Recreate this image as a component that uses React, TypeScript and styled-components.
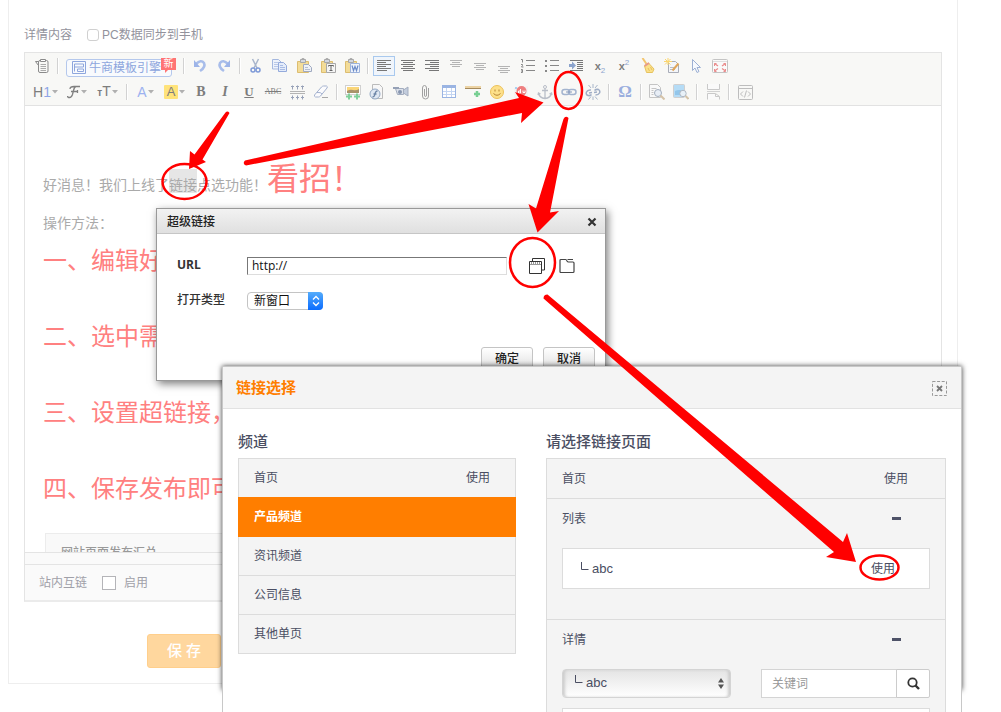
import React from "react";
import styled, { createGlobalStyle } from "styled-components";

const GlobalStyle = createGlobalStyle`
  *, *::before, *::after { box-sizing: border-box; }
  body {
    margin: 0;
    background: #fff;
    font-family: "Liberation Sans", "Noto Sans CJK SC", sans-serif;
    font-size: 12px;
    line-height: 18px;
    color: #4a4e62;
  }
  button, input, select { font: inherit; color: inherit; margin: 0; }
  p, h2, h3, ul { margin: 0; padding: 0; }
`;

const RED = "#ff0000";

/* ---------- page ---------- */

const Page = styled.div`
  position: relative;
  min-height: 100vh;
  overflow: hidden;
`;

const Panel = styled.main`
  margin: 0 43px 0 8px;
  padding: 26px 15px 15px;
  border: 1px solid #eee;
  border-top: 0;
`;

const FieldRow = styled.div`
  display: flex;
  align-items: center;
  height: 18px;
  margin-bottom: 8px;
  color: #92929c;
`;

const CheckLabel = styled.label`
  display: flex;
  align-items: center;
  gap: 3px;
  margin-left: 15px;
`;

const Tick = styled.input<{ $square?: boolean }>`
  appearance: none;
  width: ${(p) => (p.$square ? 14 : 12)}px;
  height: ${(p) => (p.$square ? 14 : 12)}px;
  margin-right: ${(p) => (p.$square ? 5 : 0)}px;
  border: 1px solid ${(p) => (p.$square ? "#b4b4b8" : "#d0d0d0")};
  border-radius: ${(p) => (p.$square ? 0 : 3)}px;
  background: #fff;
`;

/* ---------- editor ---------- */

const Editor = styled.section`
  border: 1px solid #e4e4e4;
  border-bottom: 2px solid #ebebeb;
`;

const Toolbar = styled.div`
  padding: 0 5px;
  background: #f8f8f6;
  border-bottom: 1px solid #e2e2e2;
`;

const ToolRow = styled.div`
  display: flex;
  align-items: center;
  height: 26px;
`;

const ToolButton = styled.button<{ $active?: boolean }>`
  display: flex;
  flex: none;
  align-items: center;
  justify-content: center;
  width: 22px;
  height: 20px;
  margin: 0 1px;
  padding: 0;
  border: 1px solid ${(p) => (p.$active ? "#a9c9ee" : "transparent")};
  background: ${(p) => (p.$active ? "#f0f5fb" : "transparent")};
`;

const DropButton = styled.button<{ $narrow?: boolean }>`
  display: flex;
  flex: none;
  align-items: center;
  justify-content: center;
  gap: 1px;
  width: ${(p) => (p.$narrow ? 29 : 31)}px;
  height: 20px;
  padding: 0;
  border: 0;
  background: transparent;
`;

const Divider = styled.span`
  flex: none;
  width: 2px;
  height: 16px;
  margin: 0 3px;
  background: linear-gradient(90deg, #d2d2d2 50%, #fff 50%);
`;

const Glyph = styled.span<{ $tone?: string; $serif?: boolean; $size?: number; $bold?: boolean }>`
  font-family: ${(p) => (p.$serif ? '"Liberation Serif", serif' : '"Liberation Sans", sans-serif')};
  font-size: ${(p) => p.$size ?? 14}px;
  font-weight: ${(p) => (p.$bold ? 700 : 400)};
  line-height: 16px;
  color: ${(p) => p.$tone ?? "#7d7d7d"};
`;

const ItalicGlyph = styled(Glyph)`
  font-style: italic;
`;

const UnderGlyph = styled(Glyph)`
  text-decoration: underline;
`;

const StrikeGlyph = styled(Glyph)`
  text-decoration: line-through;
`;

const MarkGlyph = styled(Glyph)`
  width: 14px;
  height: 14px;
  line-height: 14px;
  text-align: center;
  border-radius: 1px;
  background: #ffe37a;
`;

const ScriptGlyph = styled(Glyph)`
  line-height: 1px;
`;

const TemplateButton = styled.button`
  position: relative;
  display: flex;
  flex: none;
  align-items: center;
  gap: 3px;
  width: 106px;
  height: 18px;
  margin: 3px 8px 0 4px;
  padding: 0 5px;
  border: 1px solid #b5c8ec;
  border-radius: 3px;
  background: #f8fafd;
  color: #8ea6dd;
  white-space: nowrap;
`;

const NewBadge = styled.span`
  position: absolute;
  top: -2px;
  right: -5px;
  width: 15px;
  height: 12px;
  background: #ff7474;
  color: #fff;
  font-size: 10px;
  line-height: 12px;
  text-align: center;
  &::after {
    content: "";
    position: absolute;
    left: 4px;
    top: 12px;
    border-top: 3px solid #ff7474;
    border-right: 3px solid transparent;
  }
`;

const Content = styled.article`
  height: 446px;
  padding: 49px 18px 0;
  overflow: hidden;
  font-size: 14px;
  color: #aaa;
`;

const Intro = styled.p`
  display: flex;
  align-items: baseline;
  height: 58px;
  line-height: 48px;
  white-space: pre;
`;

const Selected = styled.span`
  padding: 8px 0 0;
  background: #e6e6e6;
  line-height: 16px;
`;

const Shout = styled.strong`
  font-size: 32px;
  font-weight: 400;
  color: #ff8080;
`;

const Method = styled.p`
  line-height: 20px;
`;

const Step = styled.p`
  height: 36px;
  margin-bottom: 40px;
  font-size: 24px;
  line-height: 36px;
  color: #ff8080;
  white-space: nowrap;
`;

const Steps = styled.div`
  padding-top: 10px;
`;

const Summary = styled.div`
  margin: -14px 0 0 2px;
  padding: 10px 15px;
  border: 1px solid #ececec;
  background: #f9f9f9;
  font-size: 12px;
  font-weight: 500;
  color: #999;
`;

const StatusBar = styled.div`
  height: 13px;
  border: solid #e4e4e4;
  border-width: 1px 0;
  background: #fafafa;
`;

const LinkRow = styled.div`
  display: flex;
  align-items: center;
  height: 35px;
  padding: 0 14px;
  background: #fafafa;
  color: #a0a0a8;
`;

const SaveButton = styled.button`
  display: block;
  width: 74px;
  height: 34px;
  margin: 32px 0 0 123px;
  padding: 0;
  border: 1px solid #ffcf8c;
  border-radius: 3px;
  background: #ffd79e;
  color: #fff;
  font-size: 15px;
  font-weight: 500;
`;

/* ---------- hyperlink dialog ---------- */

const LinkDialog = styled.section`
  position: absolute;
  left: 156px;
  top: 208px;
  width: 450px;
  border: 1px solid #999;
  background: #fff;
  box-shadow: 2px 3px 8px rgba(0, 0, 0, 0.5);
  color: #222;
`;

const LinkDialogHead = styled.header`
  display: flex;
  align-items: center;
  justify-content: space-between;
  height: 25px;
  padding: 1px 8px 0 10px;
  border-bottom: 1px solid #c6c6c6;
  background: linear-gradient(#f2f2f2, #e0e0e0);
`;

const LinkDialogTitle = styled.h2`
  font-size: 12px;
  font-weight: 500;
`;

const PlainButton = styled.button`
  display: flex;
  padding: 0;
  border: 0;
  background: transparent;
`;

const LinkDialogBody = styled.div`
  padding: 20px 10px 9px 20px;
`;

const FormRow = styled.div`
  display: flex;
  align-items: center;
  height: 24px;
  margin-bottom: 11px;
`;

const FormLabel = styled.label`
  width: 70px;
  font-family: "Open Sans", "Noto Sans CJK SC", sans-serif;
  font-weight: 700;
  line-height: 20px;
  padding-bottom: 2px;
  color: #333;
`;

const CjkLabel = styled(FormLabel)`
  font-weight: 500;
`;

const UrlInput = styled.input`
  width: 260px;
  height: 18px;
  margin-right: 22px;
  padding: 0 4px;
  border: 1px solid #ddd;
  border-top-color: #777;
  border-left-color: #777;
  font-family: "Open Sans", sans-serif;
  color: #111;
`;

const PickButton = styled(PlainButton)`
  margin-right: 14px;
`;

const SelectWrap = styled.span`
  position: relative;
  display: flex;
  width: 76px;
`;

const OpenSelect = styled.select`
  appearance: none;
  width: 100%;
  height: 18px;
  padding: 0 6px;
  border: 1px solid #c4c4c4;
  border-radius: 4px;
  background: #fff;
  color: #111;
  line-height: 16px;
`;

const SelectKnob = styled.span`
  position: absolute;
  top: 0;
  right: 0;
  display: flex;
  align-items: center;
  justify-content: center;
  width: 15px;
  height: 18px;
  border-radius: 0 4px 4px 0;
  background: linear-gradient(#55acfb, #0a6cff);
  pointer-events: none;
`;

const DialogActions = styled.div`
  display: flex;
  justify-content: flex-end;
  gap: 10px;
  margin-top: 34px;
`;

const ActionButton = styled.button`
  width: 52px;
  height: 24px;
  padding: 0;
  border: 1px solid #c4c4c4;
  border-radius: 3px;
  background: linear-gradient(#fff, #dedede);
  font-weight: 500;
`;

/* ---------- page chooser ---------- */

const Chooser = styled.section`
  position: absolute;
  left: 222px;
  top: 366px;
  width: 740px;
  height: 324px;
  box-shadow: 0 0 5px rgba(0, 0, 0, 0.75);
`;

const ChooserSheet = styled.div`
  border: 1px solid #c8c8c8;
  background: #fff;
`;

const ChooserHead = styled.header`
  display: flex;
  align-items: center;
  justify-content: space-between;
  height: 42px;
  padding: 1px 14px 0 13px;
  border-bottom: 1px solid #e2e2e2;
  background: #f4f4f4;
`;

const ChooserTitle = styled.h2`
  font-size: 15px;
  font-weight: 700;
  color: #ff7e00;
`;

const Columns = styled.div`
  display: grid;
  grid-template-columns: 278px 1fr;
  gap: 30px;
  padding: 23px 15px 40px;
`;

const ColumnTitle = styled.h3`
  margin-bottom: 6px;
  font-size: 15px;
  font-weight: 500;
  line-height: 20px;
`;

const ChannelList = styled.ul`
  list-style: none;
  border: 1px solid #dcdcdc;
  background: #f4f4f4;
`;

const Channel = styled.li<{ $active?: boolean }>`
  display: flex;
  align-items: center;
  justify-content: space-between;
  height: ${(p) => (p.$active ? 40 : 39)}px;
  margin: ${(p) => (p.$active ? "-1px -1px 0" : "0")};
  padding: ${(p) => (p.$active ? "0 26px 0 16px" : "0 25px 0 15px")};
  border-bottom: ${(p) => (p.$active ? "0" : "1px solid #dcdcdc")};
  background: ${(p) => (p.$active ? "#ff7e00" : "transparent")};
  color: ${(p) => (p.$active ? "#fff" : "inherit")};
  font-weight: ${(p) => (p.$active ? 700 : 400)};
  &:last-child { height: 38px; border-bottom: 0; }
`;

const UseLink = styled.a`
  color: inherit;
  text-decoration: none;
`;

const Groups = styled.div`
  border: 1px solid #dcdcdc;
  background: #f4f4f4;
`;

const Group = styled.section`
  padding: 0 15px;
  & + & { border-top: 1px solid #dcdcdc; }
`;

const GroupHead = styled.div`
  display: flex;
  align-items: center;
  justify-content: space-between;
  height: 39px;
  padding-right: 22px;
`;

const Minus = styled.button`
  width: 9px;
  height: 3px;
  margin-right: 7px;
  padding: 0;
  border: 0;
  background: #4e5268;
`;

const Leaf = styled.div`
  display: flex;
  align-items: center;
  justify-content: space-between;
  height: 41px;
  margin: 10px 0 30px;
  padding: 0 34px 0 18px;
  border: 1px solid #dcdcdc;
  background: #fff;
`;

const LeafName = styled.span`
  display: flex;
  align-items: flex-start;
  gap: 3px;
  font-size: 13px;
`;

const FilterRow = styled.div`
  display: flex;
  justify-content: space-between;
  margin: 10px 0;
`;

const FilterSelectWrap = styled.span`
  position: relative;
  width: 169px;
`;

const FilterSelect = styled.select`
  appearance: none;
  width: 100%;
  height: 29px;
  padding: 0 23px 2px;
  border: 1px solid #d4d4d4;
  border-radius: 4px;
  background: linear-gradient(#e4e4e4, #fff);
  box-shadow: inset 3px 0 3px -1px #ccc, inset -3px 0 3px -1px #ccc;
  font-size: 13px;
`;

const Corner = styled.span`
  position: absolute;
  top: 4px;
  left: 13px;
  display: flex;
  pointer-events: none;
`;

const Arrows = styled.span`
  position: absolute;
  top: 9px;
  right: 7px;
  display: flex;
  pointer-events: none;
`;

const SearchGroup = styled.div`
  display: flex;
  width: 169px;
  height: 29px;
`;

const SearchInput = styled.input`
  flex: 1;
  min-width: 0;
  padding: 0 10px;
  border: 1px solid #d4d4d4;
  background: #fff;
  &::placeholder { color: #999; opacity: 1; }
`;

const SearchButton = styled.button`
  display: flex;
  align-items: center;
  justify-content: center;
  width: 34px;
  margin-left: -1px;
  padding: 0;
  border: 1px solid #ccc;
  border-radius: 0 2px 2px 0;
  background: #fff;
`;

const Marks = styled.svg`
  position: absolute;
  left: 0;
  top: 0;
  pointer-events: none;
`;

/* ---------- icons ---------- */

const Icon = ({ children, size = 16 }: { children: React.ReactNode; size?: number }) => (
  <svg width={size} height={size} viewBox="0 0 16 16" fill="none" aria-hidden="true">
    {children}
  </svg>
);

const Caret = () => (
  <svg width="6" height="4" viewBox="0 0 6 4" aria-hidden="true">
    <path d="M0 0h6L3 3.500z" fill="#b0b0b0" />
  </svg>
);

const lines = (rows: [number, number, number][], color: string) =>
  rows.map(([x, y, w]) => <path key={y} d={`M${x} ${y}.5h${w}`} stroke={color} />);

const Board = () => (
  <>
    <path d="M1.500 3.500h11v11h-11z" fill="#f3dc98" stroke="#dcbd70" />
    <path d="M4.500 1.500h5v3h-5z" fill="#d3d7df" stroke="#a8a8a8" />
    <path d="M5.500 1.500q0-1 1.500-1t1.500 1" stroke="#a8a8a8" />
  </>
);

const icons: Record<string, React.ReactNode> = {
  note: (
    <>
      <path d="M1.500 3.500h3v3M1.500 3.500l3 4M4.500 4v9q0 1.500 1.500 1.500h6.500q1.500 0 1.500-1.500v-9q0-1.500-1.500-1.500h-6.500q-1.500 0-1.500 1.500" stroke="#8a8a8a" />
      <path d="M6.500 1.500h5v2h-5z" fill="#fff" stroke="#8a8a8a" />
      <path d="M6.500 6.500h5.500M6.500 8.500h5.500M6.500 10.500h5.500M6.500 12.500h5.500" stroke="#aaa" />
    </>
  ),
  undo: (
    <>
      <path d="M4 6q5-5 8-1 2 4-4 8" stroke="#a8bdea" strokeWidth="2.600" />
      <path d="M2 2v7h6z" fill="#9db4e8" />
    </>
  ),
  redo: (
    <>
      <path d="M12 6q-5-5-8-1-2 4 4 8" stroke="#a8bdea" strokeWidth="2.600" />
      <path d="M14 2v7h-6z" fill="#9db4e8" />
    </>
  ),
  cut: (
    <>
      <path d="M4.500 1l4.500 9M10.500 1l-4.500 9" stroke="#a9b6cc" strokeWidth="1.500" />
      <circle cx="5" cy="12" r="2" stroke="#7e9ad8" strokeWidth="1.500" />
      <circle cx="10" cy="12" r="2" stroke="#7e9ad8" strokeWidth="1.500" />
    </>
  ),
  copy: (
    <>
      <path d="M.5 1.500h6l3 3v6.500h-9z" fill="#edf2fb" stroke="#a5b8df" />
      <path d="M2 4.500h4M2 6.500h5M2 8.500h5" stroke="#b9c8e8" />
      <path d="M6.500 4.500h5l3 3v6h-8z" fill="#e4ecfa" stroke="#94aadb" />
      <path d="M8 7.500h3M8 9.500h5M8 11.500h5" stroke="#a9bce4" />
    </>
  ),
  paste: (
    <>
      <Board />
      <path d="M7.500 6.500h5l3 3v4h-8z" fill="#eef1f7" stroke="#a0aac0" />
      <path d="M9 9.500h3M9 11.500h5" stroke="#b5bed2" />
    </>
  ),
  pasteText: (
    <>
      <Board />
      <path d="M6.500 5.500h9v9h-9z" fill="#f5f5f5" stroke="#a8a8a8" />
      <path d="M8.500 8.500v-1h5v1M11 7.500v5M9.500 12.500h3" stroke="#666" />
    </>
  ),
  pasteWord: (
    <>
      <Board />
      <path d="M6.500 5.500h9v9h-9z" fill="#eef3fc" stroke="#9db3dc" />
      <path d="M8 7.500l1.500 5 1.500-4 1.500 4 1.500-5" stroke="#6c8cc8" strokeWidth="1.200" />
    </>
  ),
  left: lines([[1, 2, 14], [1, 4, 9], [1, 6, 14], [1, 8, 9], [1, 10, 14], [1, 12, 10]], "#777"),
  center: lines([[1, 2, 14], [3, 4, 10], [1, 6, 14], [3, 8, 10], [1, 10, 14], [3, 12, 10]], "#777"),
  right: lines([[1, 2, 14], [6, 4, 9], [1, 6, 14], [6, 8, 9], [1, 10, 14], [5, 12, 10]], "#777"),
  top: lines([[2, 2, 12], [4, 4, 8], [2, 6, 12], [4, 8, 8]], "#b4b4b4"),
  middle: lines([[2, 5, 12], [4, 7, 8], [2, 9, 12], [4, 11, 8]], "#b4b4b4"),
  bottom: lines([[2, 8, 12], [4, 10, 8], [2, 12, 12], [4, 14, 8]], "#b4b4b4"),
  ordered: (
    <>
      <path d="M6 2.500h9M6 7.500h9M6 12.500h9" stroke="#888" />
      <path d="M1 1.500h1.500v3M1 6.500h1.500v1l-1 1.500h2M1 11.500h1.500v3h-1.500M1 13h1.500" stroke="#888" />
    </>
  ),
  bullets: (
    <>
      <path d="M6 2.500h9M6 7.500h9M6 12.500h9" stroke="#888" />
      <path d="M1 2h2v2h-2zM1 7h2v2h-2zM1 12h2v2h-2z" fill="#888" />
    </>
  ),
  indent: (
    <>
      <path d="M2 2.500h13M9 4.500h6M9 6.500h6M9 8.500h6M9 10.500h6M2 12.500h13" stroke="#777" />
      <path d="M1 6h3v-2.500l4 4-4 4v-2.500h-3z" fill="#8ba3cc" />
    </>
  ),
  broom: (
    <>
      <path d="M2.500 0l4 6" stroke="#f3c56e" strokeWidth="2" />
      <path d="M4.500 8l4-3 5.500 6-1.500 3.500h-6z" fill="#fbe08a" stroke="#e6c25e" />
      <path d="M4.500 8l4.500-3" stroke="#e79a8a" strokeWidth="2" />
      <path d="M8 10l1.500 3M10.500 9l1.500 3" stroke="#e6c25e" />
    </>
  ),
  format: (
    <>
      <path d="M4.500 3.500h7l3 3v8h-10z" fill="#f4f6fa" stroke="#a9adb8" />
      <path d="M6 9.500h6M6 11.500h5" stroke="#b9bdc8" />
      <path d="M0 3.500h8M4 0v7M1 1l5.500 5.500M6.500 1l-5.500 5.500" stroke="#fbd66e" />
      <path d="M14.500 5.500l-6 7" stroke="#e0a65c" strokeWidth="2" />
    </>
  ),
  pointer: <path d="M4.500 1.500v11l2.500-2.500 2 4.500 2-1-2-4h3.500z" fill="#f6f9fe" stroke="#9db0d4" />,
  fullscreen: (
    <>
      <rect x=".5" y="1.500" width="15" height="13" rx="1" fill="#fafafa" stroke="#c4c4c4" />
      <path d="M1 3.500h14" stroke="#e0e0e0" />
      <path d="M2.500 5.500l3.500 2.500M2.500 13l3.500-2.500M13.500 5.500l-3.500 2.500M13.500 13l-3.500-2.500" stroke="#ea8c8c" strokeWidth="1.300" />
      <path d="M2.500 8v-2.500h2M2.500 11v2.500h2M13.500 8v-2.500h-2M13.500 11v2.500h-2" stroke="#ea8c8c" />
    </>
  ),
  hr: (
    <>
      <path d="M1 7.500h15M1 9.500h15" stroke="#b4b4b4" />
      <path d="M3.500 1.500v4M8.500 1.500v4M13.500 1.500v4M3.500 11.500v4M8.500 11.500v4M13.500 11.500v4" stroke="#98a2b8" />
      <path d="M2 2.500h3M7 2.500h3M12 2.500h3M2 13.500h3M7 13.500h3M12 13.500h3" stroke="#98a2b8" />
    </>
  ),
  eraser: (
    <>
      <path d="M1.500 11l7-8q1-1 2-1h3q1.500.5.5 2l-6.500 8q-1 1-2 1h-3q-1.500-.5-1-2z" fill="#fbfbfd" stroke="#a4b2cf" />
      <path d="M4 8.500q4-.5 5 1.500" stroke="#a4b2cf" />
      <path d="M9 13.500h6" stroke="#a8a8a8" />
    </>
  ),
  image: (
    <>
      <rect x=".5" y="1.500" width="15" height="9" fill="#fff" stroke="#d0d0d0" />
      <path d="M2 3h12v6h-12z" fill="#fad679" />
      <path d="M2 7q3-2 6-1t6-1v4h-12z" fill="#a8946c" />
      <path d="M1 12.500h6M4 9.500v6M9 12.500h6M12 9.500v6" stroke="#7fd09a" strokeWidth="2" />
    </>
  ),
  flash: (
    <>
      <path d="M3.500.5h7l3 3v11h-10z" fill="#f7f7f7" stroke="#bbb" />
      <circle cx="6" cy="10" r="5" fill="#dfe7f2" stroke="#93a8c4" />
      <path d="M8.500 7q-2 0-2.500 3t-2.500 3M4.500 10h3" stroke="#6f87a8" strokeWidth="1.300" />
    </>
  ),
  video: (
    <>
      <path d="M2.500 4.500h8v6h-6z" fill="#dce1ea" stroke="#a3adbf" />
      <path d="M10.500 6l4.500-3v9l-4.500-3z" fill="#c3cddd" stroke="#a3adbf" />
      <circle cx="7" cy="8" r="2" fill="#8796b0" />
      <path d="M0 4h6" stroke="#95a1b6" strokeWidth="2" />
    </>
  ),
  clip: <path d="M11.500 4v8q0 3-3 3t-3-3v-8q0-2.500 2-2.500t2 2.500v7q0 1.500-1 1.500t-1-1.500v-6" stroke="#a0a0a0" />,
  table: (
    <>
      <rect x="1.500" y="1.500" width="13" height="12" fill="#fff" stroke="#9ab4e2" />
      <path d="M2 3h12" stroke="#9ab4e2" strokeWidth="2" />
      <path d="M2 7.500h12M2 10.500h12M5.500 4v9M10.500 4v9" stroke="#c3d5f2" />
    </>
  ),
  line: (
    <>
      <path d="M0 3h16" stroke="#ecd3a4" strokeWidth="2" />
      <path d="M0 4.500h16" stroke="#a58a5c" />
      <path d="M9 10h6M12 7v6" stroke="#78cf92" strokeWidth="2.500" />
    </>
  ),
  smile: (
    <>
      <circle cx="8" cy="8" r="6.500" fill="#fde08a" stroke="#ecc15a" />
      <path d="M6 5.500v2M10 5.500v2M4.500 9.500q3.500 3.500 7 0" stroke="#b58435" />
    </>
  ),
  map: (
    <>
      <path d="M1 4l14-2v10l-14 2z" fill="#f3f3f3" />
      <circle cx="8.500" cy="7" r="5" fill="#ee7f7f" />
      <path d="M7.500 5v4h-2v-2h2M10 6.500v2h2v-2" stroke="#fff" />
      <path d="M2 4h2" stroke="#8fc6f2" strokeWidth="1.500" />
    </>
  ),
  anchor: (
    <>
      <circle cx="8" cy="3" r="1.500" stroke="#b9bec8" />
      <path d="M8 4.500v10M5 6.500h6M1.500 9q1 5 6.500 5.500 5.500-.5 6.500-5.500M1 11l.5-2 2 1M15 11l-.5-2-2 1" stroke="#b9bec8" strokeWidth="1.300" />
    </>
  ),
  link: (
    <>
      <rect x="1" y="5.500" width="7.500" height="5" rx="2.500" stroke="#a3b4cf" strokeWidth="1.500" />
      <rect x="7.500" y="5.500" width="7.500" height="5" rx="2.500" stroke="#a3b4cf" strokeWidth="1.500" />
      <path d="M5 8h6" stroke="#8598ba" />
    </>
  ),
  unlink: (
    <>
      <path d="M6.500 10.500q-1 1.500-3.500 1-2.500-1-1.500-3.500t4.500-2M9.500 6.500q1.500-1.500 4-1 2 1.500 1 3.500t-4 2M4 9l3-.5M9 8.500l3-.5" stroke="#a0aec6" strokeWidth="1.500" />
      <path d="M8 0v4M3.500 1l2.500 3M12.500 1l-2.500 3M8 12.500v3.500M3.500 15.500l2.500-3M12.500 15.500l-2.500-3" stroke="#a8b6ca" />
    </>
  ),
  preview: (
    <>
      <path d="M.5.500h8l3 3v10h-11z" fill="#f9f9f9" stroke="#c4c4c4" />
      <path d="M2.500 4.500h5M2.500 6.500h2M2.500 8.500h2M2.500 10.500h2" stroke="#c5c5c5" />
      <circle cx="9" cy="9" r="3.500" fill="#e8eef6" stroke="#a3aebd" />
      <path d="M11.500 11.500l4 4" stroke="#d5c3a8" strokeWidth="2" />
    </>
  ),
  phone: (
    <>
      <rect x=".5" y=".5" width="11" height="13" rx="1" fill="#b5dcf6" stroke="#cfcfcf" />
      <path d="M2 7q4-2 9 0v4h-9z" fill="#93c6ea" />
      <circle cx="10" cy="9.500" r="3.200" fill="#e8f1f8" stroke="#b0b8c3" />
      <path d="M12.500 12l3 3" stroke="#d5c3a8" strokeWidth="2" />
    </>
  ),
  pageBreak: (
    <>
      <path d="M2.500 0v5.500h12v-5.500M2.500 15.500v-6h8l4 3v3" fill="#fafafa" stroke="#c9c9c9" />
      <path d="M2 7.500h13" stroke="#d2d2d2" />
      <path d="M10.500 10v2.500h3.500" stroke="#c9c9c9" />
    </>
  ),
  source: (
    <>
      <rect x="1.500" y="1.500" width="14" height="14" rx="1" stroke="#bdbdbd" />
      <path d="M1 4.500h14" stroke="#bdbdbd" />
      <path d="M6 7.500l-2.500 2.500 2.500 2.500M11 7.500l2.500 2.500-2.500 2.500M9.500 6.500l-2 7" stroke="#bdbdbd" />
    </>
  ),
};

const Tool = ({ name, label, active }: { name: string; label: string; active?: boolean }) => (
  <ToolButton type="button" aria-label={label} $active={active}>
    <Icon>{icons[name]}</Icon>
  </ToolButton>
);

const CornerMark = () => (
  <svg width="8" height="14" viewBox="0 0 8 14" fill="none" aria-hidden="true">
    <path d="M.5 2v7.500h7" stroke="#4a4e62" />
  </svg>
);

const EditorToolbar = () => (
  <Toolbar role="toolbar">
    <ToolRow>
      <Tool name="note" label="草稿" />
      <Divider />
      <TemplateButton type="button">
        <svg width="14" height="13" viewBox="0 0 14 13" fill="none" stroke="#8ea6dd" aria-hidden="true">
          <path d="M.5.500h13v12h-13zM2.500 10.500v-7.500h9v3h-9M5.500 10.500v-2.500h6v2.500z" />
        </svg>
        牛商模板引擎
        <NewBadge>新</NewBadge>
      </TemplateButton>
      <Divider />
      <Tool name="undo" label="撤销" />
      <Tool name="redo" label="重做" />
      <Divider />
      <Tool name="cut" label="剪切" />
      <Tool name="copy" label="复制" />
      <Tool name="paste" label="粘贴" />
      <Tool name="pasteText" label="粘贴为文本" />
      <Tool name="pasteWord" label="从Word粘贴" />
      <Divider />
      <Tool name="left" label="左对齐" active />
      <Tool name="center" label="居中" />
      <Tool name="right" label="右对齐" />
      <Tool name="top" label="顶端对齐" />
      <Tool name="middle" label="垂直居中" />
      <Tool name="bottom" label="底端对齐" />
      <Tool name="ordered" label="编号" />
      <Tool name="bullets" label="项目符号" />
      <Tool name="indent" label="首行缩进" />
      <ToolButton type="button" aria-label="下标">
        <Glyph $size={11} $bold>x<ScriptGlyph as="sub" $size={8} $tone="#8fa6d0">2</ScriptGlyph></Glyph>
      </ToolButton>
      <ToolButton type="button" aria-label="上标">
        <Glyph $size={11} $bold>x<ScriptGlyph as="sup" $size={8} $tone="#8fa6d0">2</ScriptGlyph></Glyph>
      </ToolButton>
      <Tool name="broom" label="清除格式" />
      <Tool name="format" label="自动排版" />
      <Tool name="pointer" label="全选" />
      <Tool name="fullscreen" label="全屏" />
    </ToolRow>
    <ToolRow>
      <DropButton type="button" aria-label="标题">
        <Glyph $size={14}>H<Glyph $tone="#8fa6e8">1</Glyph></Glyph>
        <Caret />
      </DropButton>
      <DropButton type="button" aria-label="字体">
        <svg width="13" height="14" viewBox="0 0 13 14" fill="none" stroke="#808080" aria-hidden="true">
          <path d="M3 4q0-2.500 4-2.500h6M9 1.500q-1.500 0-2.500 4l-1 4q-1 3-3 3t-2-1.500M4 6.500h6.500M10.500 5v3" strokeWidth="1.300" />
        </svg>
        <Caret />
      </DropButton>
      <DropButton type="button" aria-label="字号">
        <Glyph $size={14}><Glyph $size={10} $bold>т</Glyph>T</Glyph>
        <Caret />
      </DropButton>
      <Divider />
      <DropButton type="button" aria-label="文字颜色" $narrow>
        <Glyph $tone="#9cb2f0">A</Glyph>
        <Caret />
      </DropButton>
      <DropButton type="button" aria-label="背景颜色" $narrow>
        <MarkGlyph $size={13}>A</MarkGlyph>
        <Caret />
      </DropButton>
      <ToolButton type="button" aria-label="粗体"><Glyph $serif $bold>B</Glyph></ToolButton>
      <ToolButton type="button" aria-label="斜体"><ItalicGlyph $serif $bold>I</ItalicGlyph></ToolButton>
      <ToolButton type="button" aria-label="下划线"><UnderGlyph $serif $size={13} $bold>U</UnderGlyph></ToolButton>
      <ToolButton type="button" aria-label="删除线"><StrikeGlyph $serif $size={8}>ABC</StrikeGlyph></ToolButton>
      <Tool name="hr" label="行距" />
      <Tool name="eraser" label="橡皮擦" />
      <Divider />
      <Tool name="image" label="图片" />
      <Tool name="flash" label="Flash" />
      <Tool name="video" label="视频" />
      <Tool name="clip" label="附件" />
      <Tool name="table" label="表格" />
      <Tool name="line" label="横线" />
      <Tool name="smile" label="表情" />
      <Tool name="map" label="地图" />
      <Tool name="anchor" label="锚点" />
      <Tool name="link" label="超级链接" />
      <Tool name="unlink" label="取消超级链接" />
      <Divider />
      <ToolButton type="button" aria-label="特殊字符">
        <Glyph $serif $bold $size={17} $tone="#9aaede">Ω</Glyph>
      </ToolButton>
      <Divider />
      <Tool name="preview" label="预览" />
      <Tool name="phone" label="手机预览" />
      <Divider />
      <Tool name="pageBreak" label="分页" />
      <Divider />
      <Tool name="source" label="源代码" />
    </ToolRow>
  </Toolbar>
);

const HyperlinkDialog = () => (
  <LinkDialog role="dialog" aria-labelledby="link-title">
    <LinkDialogHead>
      <LinkDialogTitle id="link-title">超级链接</LinkDialogTitle>
      <PlainButton type="button" aria-label="关闭">
        <svg width="10" height="10" viewBox="0 0 10 10" aria-hidden="true">
          <path d="M1.500 1.500l7 7M8.500 1.500l-7 7" stroke="#333" strokeWidth="2.200" />
        </svg>
      </PlainButton>
    </LinkDialogHead>
    <LinkDialogBody>
      <FormRow>
        <FormLabel htmlFor="url">URL</FormLabel>
        <UrlInput id="url" defaultValue="http://" />
        <PickButton type="button" aria-label="选择页面">
          <Icon>
            <path d="M3.500 3v-2.500h12v11.500h-3" stroke="#333" />
            <path d="M.5 3.500h12v12h-12z" fill="#fff" stroke="#333" />
            <path d="M1 6.500h11" stroke="#999" />
            <path d="M2 5h1M4 5h1M6 5h1M8 5h1M10 5h1" stroke="#333" />
          </Icon>
        </PickButton>
        <PlainButton type="button" aria-label="选择文件">
          <Icon>
            <path d="M2 1.500h4.500q1 0 1.500 1.500.5 1 1.500 1h4.500q1 0 1 1v8.500q0 1-1 1h-12q-1 0-1-1v-11q0-1 1-1zM8.500 1.500h5.500" stroke="#444" strokeWidth="1.200" />
          </Icon>
        </PlainButton>
      </FormRow>
      <FormRow>
        <CjkLabel htmlFor="open-type">打开类型</CjkLabel>
        <SelectWrap>
          <OpenSelect id="open-type">
            <option>新窗口</option>
          </OpenSelect>
          <SelectKnob>
            <svg width="8" height="12" viewBox="0 0 8 12" fill="none" aria-hidden="true">
              <path d="M1 4.500L4 1.500l3 3M1 7.500l3 3 3-3" stroke="#fff" strokeWidth="1.300" />
            </svg>
          </SelectKnob>
        </SelectWrap>
      </FormRow>
      <DialogActions>
        <ActionButton type="button">确定</ActionButton>
        <ActionButton type="button">取消</ActionButton>
      </DialogActions>
    </LinkDialogBody>
  </LinkDialog>
);

const channels = ["首页", "产品频道", "资讯频道", "公司信息", "其他单页"];

const PageChooser = () => (
  <Chooser role="dialog" aria-labelledby="chooser-title">
    <ChooserSheet>
      <ChooserHead>
        <ChooserTitle id="chooser-title">链接选择</ChooserTitle>
        <PlainButton type="button" aria-label="关闭">
          <svg width="15" height="15" viewBox="0 0 15 15" fill="none" aria-hidden="true">
            <rect x=".5" y=".5" width="14" height="14" stroke="#999" strokeDasharray="3 1.600" />
            <path d="M5 5l5 5M10 5l-5 5" stroke="#777" strokeWidth="1.800" />
          </svg>
        </PlainButton>
      </ChooserHead>
      <Columns>
        <div>
          <ColumnTitle>频道</ColumnTitle>
          <ChannelList>
            {channels.map((name, i) => (
              <Channel key={name} $active={i === 1}>
                {name}
                {i === 0 && <UseLink href="#use-home">使用</UseLink>}
              </Channel>
            ))}
          </ChannelList>
        </div>
        <div>
          <ColumnTitle>请选择链接页面</ColumnTitle>
          <Groups>
            <Group>
              <GroupHead>
                首页
                <UseLink href="#use-page">使用</UseLink>
              </GroupHead>
            </Group>
            <Group>
              <GroupHead>
                列表
                <Minus type="button" aria-label="收起列表" />
              </GroupHead>
              <Leaf>
                <LeafName><CornerMark />abc</LeafName>
                <UseLink href="#use-abc">使用</UseLink>
              </Leaf>
            </Group>
            <Group>
              <GroupHead>
                详情
                <Minus type="button" aria-label="收起详情" />
              </GroupHead>
              <FilterRow>
                <FilterSelectWrap>
                  <FilterSelect aria-label="列表">
                    <option>abc</option>
                  </FilterSelect>
                  <Corner><CornerMark /></Corner>
                  <Arrows>
                    <svg width="6" height="11" viewBox="0 0 6 11" aria-hidden="true">
                      <path d="M3 0l3 4.500H0zM3 11l3-4.500H0z" fill="#555" />
                    </svg>
                  </Arrows>
                </FilterSelectWrap>
                <SearchGroup>
                  <SearchInput aria-label="关键词" placeholder="关键词" />
                  <SearchButton type="button" aria-label="搜索">
                    <svg width="13" height="13" viewBox="0 0 13 13" fill="none" stroke="#333" aria-hidden="true">
                      <circle cx="5.500" cy="5.500" r="4.200" strokeWidth="1.800" />
                      <path d="M8.500 8.500l3.500 3.500" strokeWidth="2.400" />
                    </svg>
                  </SearchButton>
                </SearchGroup>
              </FilterRow>
              <Leaf />
            </Group>
          </Groups>
        </div>
      </Columns>
    </ChooserSheet>
  </Chooser>
);

const Annotations = () => (
  <Marks width="1001" height="712" viewBox="0 0 1001 712" aria-hidden="true">
    <g fill={RED}>
      <path d="M225.500 112.500q2-2 4 .500L202.500 159.500l3.500 2.500-17 7 1-18 4.500 3.500z" />
      <path d="M245 160.500L519 98l-4-6 28.500 10.500L521 123l1-10L246 165.500q-4-2-1-5z" />
      <path d="M563.500 119q2-4 5-1L550 212.500l9-1.500L537.500 232.500 528.500 204l7.500 4.500z" />
      <path d="M543.500 298.500q0-4 4-4L843 542l4-9 9 29-30-5 8-5z" />
    </g>
    <g fill="none" stroke={RED} strokeWidth="2.500">
      <ellipse cx="184.500" cy="181.500" rx="22" ry="17.500" />
      <ellipse cx="568.500" cy="90.500" rx="13.500" ry="18.500" />
      <ellipse cx="532.500" cy="262.500" rx="22.500" ry="24.500" />
      <ellipse cx="879.500" cy="567.500" rx="19" ry="12" />
    </g>
  </Marks>
);

export default function App() {
  return (
    <>
      <GlobalStyle />
      <Page>
        <Panel>
          <FieldRow>
            详情内容
            <CheckLabel>
              <Tick type="checkbox" />
              PC数据同步到手机
            </CheckLabel>
          </FieldRow>
          <Editor>
            <EditorToolbar />
            <Content>
              <Intro>
                好消息！我们上线了<Selected>链接</Selected>点选功能！<Shout>看招！</Shout>
              </Intro>
              <Method>操作方法：</Method>
              <Steps>
                <Step>一、编辑好</Step>
                <Step>二、选中需</Step>
                <Step>三、设置超链接，</Step>
                <Step>四、保存发布即可</Step>
              </Steps>
              <Summary>网站页面发布汇总</Summary>
            </Content>
            <StatusBar />
            <LinkRow>
              站内互链
              <CheckLabel>
                <Tick type="checkbox" $square />
                启用
              </CheckLabel>
            </LinkRow>
          </Editor>
          <SaveButton type="button">保 存</SaveButton>
        </Panel>
        <HyperlinkDialog />
        <PageChooser />
        <Annotations />
      </Page>
    </>
  );
}
